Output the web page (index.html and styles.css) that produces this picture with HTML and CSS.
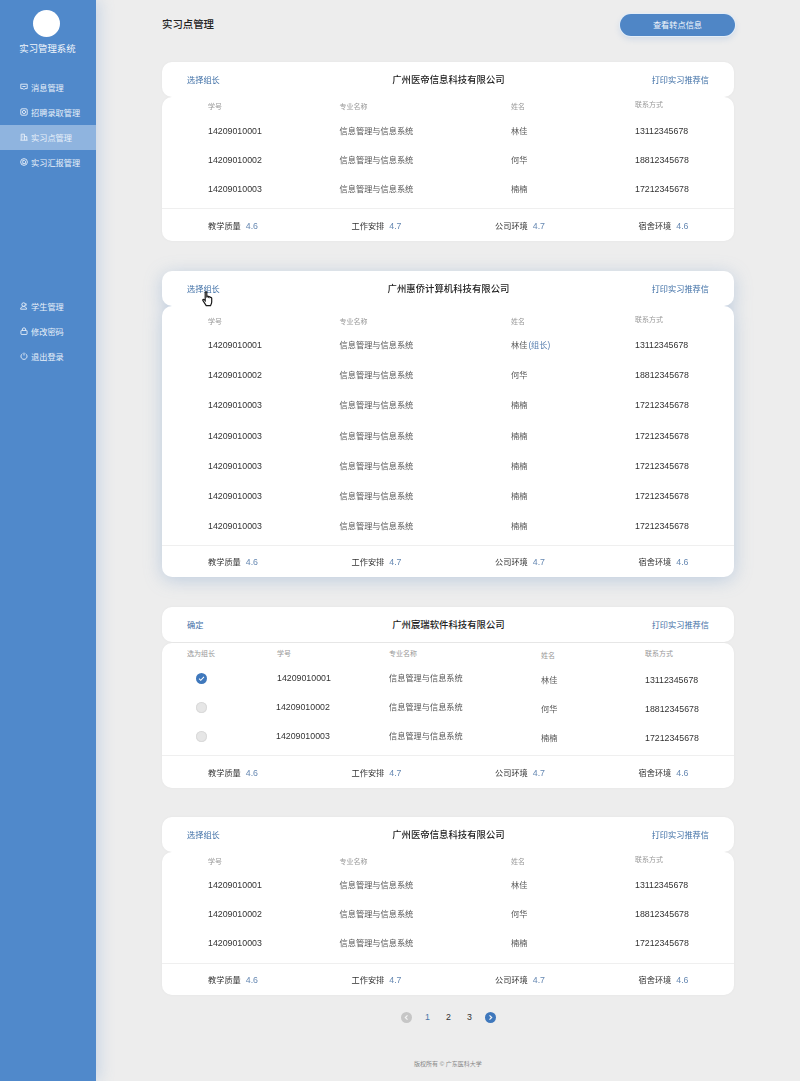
FILE: index.html
```html
<!DOCTYPE html>
<html lang="zh-CN">
<head>
    <meta charset="UTF-8">
    <meta name="viewport" content="width=device-width, initial-scale=1.0">
    <title>实习点管理</title>
    <link rel="stylesheet" href="styles.css">
</head>
<body>
    <div class="sidebar">
        <div class="avatar"></div>
        <div class="system-name">实习管理系统</div>

        <ul class="nav">
            <li><svg class="nav-icon" viewBox="0 0 10 10"><path d="M1 1.500h8v5.500H6L5 8.200 4 7H1z M3 4.400h4"/></svg>消息管理</li>
            <li><svg class="nav-icon" viewBox="0 0 10 10"><rect x="1" y="1" width="8" height="8" rx="1.500"/><circle cx="5" cy="5" r="2"/></svg>招聘录取管理</li>
            <li class="active"><svg class="nav-icon" viewBox="0 0 10 10"><path d="M.5 9h9 M1.500 9V1.500h4V9 M5.500 4.500h3V9 M3 4h1 M3 6h1"/></svg>实习点管理</li>
            <li><svg class="nav-icon" viewBox="0 0 10 10"><circle cx="5" cy="5" r="4.200"/><path d="M3.500 7V3h2.200L6.800 4v3z"/></svg>实习汇报管理</li>
        </ul>

        <ul class="nav nav-bottom">
            <li><svg class="nav-icon" viewBox="0 0 10 10"><circle cx="4.500" cy="3.200" r="2.200"/><path d="M.8 9c0-2.200 1.500-3.300 3.700-3.300S8.200 6.800 8.200 9z M6.800 1.400c1 .5 1.400 2.500.4 3.300"/></svg>学生管理</li>
            <li><svg class="nav-icon" viewBox="0 0 10 10"><rect x="1.200" y="4.300" width="7.600" height="5" rx=".6"/><path d="M3 4.300V2.500C3 .6 7 .6 7 2.500v1.800"/></svg>修改密码</li>
            <li><svg class="nav-icon" viewBox="0 0 10 10"><path d="M3 2.200a3.800 3.800 0 1 0 4 0 M5 .8v3.600"/></svg>退出登录</li>
        </ul>
    </div>

    <div class="main">
        <div class="topbar">
            <h1>实习点管理</h1>
            <button class="top-button">查看转点信息</button>
        </div>

        <!-- Card 1 -->
        <div class="card">
            <div class="card-head">
                <a class="link">选择组长</a>
                <div class="company">广州医帝信息科技有限公司</div>
                <a class="link link-right">打印实习推荐信</a>
            </div>
            <div class="card-body">
                <div class="row row-head head-19">
                    <span>学号</span><span class="major-col">专业名称</span><span>姓名</span><span class="raised">联系方式</span>
                </div>
                <div class="row"><span>14209010001</span><span class="major major-col">信息管理与信息系统</span><span class="major">林佳</span><span>13112345678</span></div>
                <div class="row"><span>14209010002</span><span class="major major-col">信息管理与信息系统</span><span class="major">何华</span><span>18812345678</span></div>
                <div class="row"><span>14209010003</span><span class="major major-col">信息管理与信息系统</span><span class="major">楠楠</span><span>17212345678</span></div>
                <div class="scores">
                    <div>教学质量<em>4.6</em></div><div>工作安排<em>4.7</em></div><div>公司环境<em>4.7</em></div><div>宿舍环境<em>4.6</em></div>
                </div>
            </div>
        </div>

        <!-- Card 2: hovered -->
        <div class="card card-hover">
            <div class="card-head">
                <a class="link">选择组长</a>
                <div class="company">广州惠侨计算机科技有限公司</div>
                <a class="link link-right">打印实习推荐信</a>
                <svg class="cursor" viewBox="0 0 12 16">
                    <path d="M3.200 1.600c0-1 1.600-1 1.600 0v5l.4-1.200c.8-.5 1.500 0 1.500.6.700-.6 1.500-.2 1.500.5.800-.4 1.500 0 1.500.8v3.700c0 1.600-.8 2.800-1.200 3.600H4.200L1 9.700c-.7-1 .5-1.900 1.300-1.100l.9 1z"/>
                </svg>
            </div>
            <div class="card-body">
                <div class="row row-head head-24">
                    <span>学号</span><span class="major-col">专业名称</span><span>姓名</span><span class="raised">联系方式</span>
                </div>
                <div class="row row-tall"><span>14209010001</span><span class="major major-col">信息管理与信息系统</span><span class="major">林佳<i class="leader">(组长)</i></span><span>13112345678</span></div>
                <div class="row row-tall"><span>14209010002</span><span class="major major-col">信息管理与信息系统</span><span class="major">何华</span><span>18812345678</span></div>
                <div class="row row-tall"><span>14209010003</span><span class="major major-col">信息管理与信息系统</span><span class="major">楠楠</span><span>17212345678</span></div>
                <div class="row row-tall"><span>14209010003</span><span class="major major-col">信息管理与信息系统</span><span class="major">楠楠</span><span>17212345678</span></div>
                <div class="row row-tall"><span>14209010003</span><span class="major major-col">信息管理与信息系统</span><span class="major">楠楠</span><span>17212345678</span></div>
                <div class="row row-tall"><span>14209010003</span><span class="major major-col">信息管理与信息系统</span><span class="major">楠楠</span><span>17212345678</span></div>
                <div class="row row-tall"><span>14209010003</span><span class="major major-col">信息管理与信息系统</span><span class="major">楠楠</span><span>17212345678</span></div>
                <div class="scores scores-short">
                    <div>教学质量<em>4.6</em></div><div>工作安排<em>4.7</em></div><div>公司环境<em>4.7</em></div><div>宿舍环境<em>4.6</em></div>
                </div>
            </div>
        </div>

        <!-- Card 3: choosing a leader -->
        <div class="card">
            <div class="card-head">
                <a class="link">确定</a>
                <div class="company">广州宸瑞软件科技有限公司</div>
                <a class="link link-right">打印实习推荐信</a>
            </div>
            <div class="card-body body-gap">
                <div class="row row-pick row-head head-20">
                    <span>选为组长</span><span>学号</span><span>专业名称</span><span class="lowered">姓名</span><span>联系方式</span>
                </div>
                <div class="row row-pick"><span><i class="radio radio-on"><svg viewBox="0 0 12 12"><path d="M3.300 6.200l1.900 1.800 3.500-3.700"/></svg></i></span><span>14209010001</span><span class="major">信息管理与信息系统</span><span class="major lowered">林佳</span><span class="lowered">13112345678</span></div>
                <div class="row row-pick"><span><i class="radio"></i></span><span class="nudge-left">14209010002</span><span class="major">信息管理与信息系统</span><span class="major lowered">何华</span><span class="lowered">18812345678</span></div>
                <div class="row row-pick"><span><i class="radio"></i></span><span class="nudge-left">14209010003</span><span class="major">信息管理与信息系统</span><span class="major lowered">楠楠</span><span class="lowered">17212345678</span></div>
                <div class="scores">
                    <div>教学质量<em>4.6</em></div><div>工作安排<em>4.7</em></div><div>公司环境<em>4.7</em></div><div>宿舍环境<em>4.6</em></div>
                </div>
            </div>
        </div>

        <!-- Card 4 -->
        <div class="card card-last">
            <div class="card-head">
                <a class="link">选择组长</a>
                <div class="company">广州医帝信息科技有限公司</div>
                <a class="link link-right">打印实习推荐信</a>
            </div>
            <div class="card-body">
                <div class="row row-head head-17">
                    <span>学号</span><span class="major-col">专业名称</span><span>姓名</span><span class="raised">联系方式</span>
                </div>
                <div class="row"><span>14209010001</span><span class="major major-col">信息管理与信息系统</span><span class="major">林佳</span><span>13112345678</span></div>
                <div class="row"><span>14209010002</span><span class="major major-col">信息管理与信息系统</span><span class="major">何华</span><span>18812345678</span></div>
                <div class="row"><span>14209010003</span><span class="major major-col">信息管理与信息系统</span><span class="major">楠楠</span><span>17212345678</span></div>
                <div class="scores scores-short scores-gap">
                    <div>教学质量<em>4.6</em></div><div>工作安排<em>4.7</em></div><div>公司环境<em>4.7</em></div><div>宿舍环境<em>4.6</em></div>
                </div>
            </div>
        </div>

        <div class="pager">
            <span class="page-arrow"><svg viewBox="0 0 11 11"><path d="M6.500 3.300L4.300 5.500l2.200 2.200"/></svg></span>
            <span class="page-num page-first">1</span>
            <span class="page-num">2</span>
            <span class="page-num">3</span>
            <span class="page-arrow page-next"><svg viewBox="0 0 11 11"><path d="M4.500 3.300l2.200 2.200-2.200 2.200"/></svg></span>
        </div>

        <div class="copyright">版权所有 © 广东医科大学</div>
    </div>
</body>
</html>
```

FILE: styles.css
```css
html, body {
    height: 1081px;
    overflow: hidden;
}

body {
    margin: 0;
    display: flex;
    background-color: #EDEDED;
    font-family: "Liberation Sans", "Noto Sans CJK SC", sans-serif;
    font-size: 8.8px;
    color: #333333;
}

/* Sidebar */
.sidebar {
    width: 96px;
    flex-shrink: 0;
    background-color: #5089CB;
    box-shadow: 4px 0 14px rgba(80, 137, 203, 0.22);
    color: #FFFFFF;
    padding-top: 10px;
    box-sizing: border-box;
}

.avatar {
    width: 27px;
    height: 27px;
    margin-left: 33px;
    border-radius: 50%;
    background-color: #FFFFFF;
}

.system-name {
    margin-top: 6px;
    padding-right: 1px;
    text-align: center;
    font-size: 9.4px;
    line-height: 12px;
    color: #F2F6FB;
}

.nav {
    list-style: none;
    margin: 20px 0 0;
    padding: 0;
    font-size: 8.2px;
}

.nav-bottom {
    margin-top: 119px;
}

.nav li {
    display: flex;
    align-items: center;
    gap: 3px;
    height: 25px;
    padding-left: 20px;
    padding-bottom: 2px;
    box-sizing: border-box;
    color: #E8F0F9;
}

.nav li.active {
    background-color: #8FB4DF;
}

.nav-icon {
    width: 8px;
    height: 8px;
    fill: none;
    stroke: #EDF3FA;
    stroke-width: 1.1;
}

/* Main column */
.main {
    width: 572px;
    margin-left: 66px;
}

.topbar {
    display: flex;
    justify-content: space-between;
    align-items: center;
    height: 50px;
    margin-bottom: 12px;
}

.topbar h1 {
    margin: 0 0 3px;
    font-size: 10.4px;
    font-weight: 500;
    color: #222222;
}

.top-button {
    width: 115px;
    height: 22px;
    margin-right: -1px;
    border: none;
    border-radius: 11px;
    background-color: #4F86C6;
    box-shadow: 0 0 0 1px #E3EDF7, 0 3px 6px rgba(80, 137, 203, 0.2);
    color: #F4F8FC;
    font-family: inherit;
    font-size: 8.2px;
    padding: 0 0 2px;
}

/* Cards */
.card {
    margin-bottom: 30px;
    filter: drop-shadow(0 0 1px rgba(0, 0, 0, 0.04));
}

.card-hover {
    filter: drop-shadow(0 3px 9px rgba(78, 128, 190, 0.3));
}

.card-last {
    margin-top: -1px;
    margin-bottom: 0;
}

.card-head {
    position: relative;
    display: grid;
    grid-template-columns: 1fr auto 1fr;
    align-items: center;
    height: 35px;
    padding: 0 25px 2px;
    box-sizing: border-box;
    background-color: #FFFFFF;
    border-radius: 10px;
}

.card-body {
    background-color: #FFFFFF;
    border-radius: 10px;
}

.body-gap {
    margin-top: 1px;
}

.company {
    margin-left: 1px;
    font-size: 9.4px;
    font-weight: 500;
    color: #222222;
}

.link {
    color: #3F6FA6;
    font-size: 8.2px;
}

.link-right {
    text-align: right;
}

.cursor {
    position: absolute;
    left: 40px;
    top: 20px;
    width: 12px;
    height: 16px;
    fill: #FFFFFF;
    stroke: #1A1A1A;
    stroke-width: 1.2;
}

/* Student rows */
.row {
    display: grid;
    grid-template-columns: 131px 172px 124px 1fr;
    align-items: center;
    height: 29px;
    padding-left: 46px;
}

.row-tall {
    height: 30.17px;
}

.row-pick {
    grid-template-columns: 90px 112px 152px 104px 1fr;
    padding-left: 25px;
}

.row-head {
    box-sizing: content-box;
    font-size: 7px;
    color: #999999;
}

.head-17 {
    height: 17.5px;
    padding-bottom: 1px;
}

.head-19 {
    height: 17.5px;
    padding-bottom: 2px;
}

.head-20 {
    height: 20.5px;
}

.head-24 {
    height: 19px;
    padding-top: 5px;
}

.raised {
    margin-top: -4px;
}

.lowered {
    margin-top: 3px;
}

.nudge-left {
    margin-left: -1px;
}

.major {
    margin-bottom: 2px;
    font-size: 8.2px;
    color: #555555;
}

.major-col {
    margin-left: 0.6px;
}

.major.lowered {
    margin-bottom: 1px;
}

.leader {
    font-style: normal;
    color: #5A80B0;
    margin-left: 1px;
}

.radio {
    display: block;
    width: 11px;
    height: 11px;
    margin-left: 9px;
    border-radius: 50%;
    background-color: #E6E6E6;
    box-shadow: inset 0 0 0 1px #DADADA;
}

.radio-on {
    background-color: #3F78BC;
    box-shadow: none;
}

.radio svg {
    display: block;
    fill: none;
    stroke: #FFFFFF;
    stroke-width: 1.1;
}

/* Score footer */
.scores {
    display: grid;
    grid-template-columns: repeat(4, 143.5px);
    align-items: center;
    height: 33px;
    margin-top: 4.5px;
    padding-left: 46px;
    border-top: 1px solid #EFEFEF;
    box-sizing: border-box;
    font-size: 8.2px;
}

.scores-short {
    height: 32px;
    margin-top: 4px;
    padding-bottom: 2px;
}

.scores-gap {
    margin-top: 5.5px;
}

.scores em {
    font-style: normal;
    font-size: 8.8px;
    color: #6688B2;
    margin-left: 5px;
}

/* Pagination */
.pager {
    display: flex;
    justify-content: center;
    gap: 10px;
    margin-top: 17px;
    padding-left: 1px;
    height: 11px;
    line-height: 11px;
    color: #333333;
}

.page-arrow {
    width: 11px;
    height: 11px;
    border-radius: 50%;
    background-color: #C6C6C6;
}

.page-arrow svg {
    display: block;
    fill: none;
    stroke: #F4F4F4;
    stroke-width: 1.2;
}

.page-next {
    background-color: #3F78BC;
}

.page-num {
    width: 11px;
    text-align: center;
}

.page-first {
    color: #4A76A8;
}

.copyright {
    margin-top: 37px;
    text-align: center;
    font-size: 6px;
    line-height: 8px;
    color: #888888;
}
```
